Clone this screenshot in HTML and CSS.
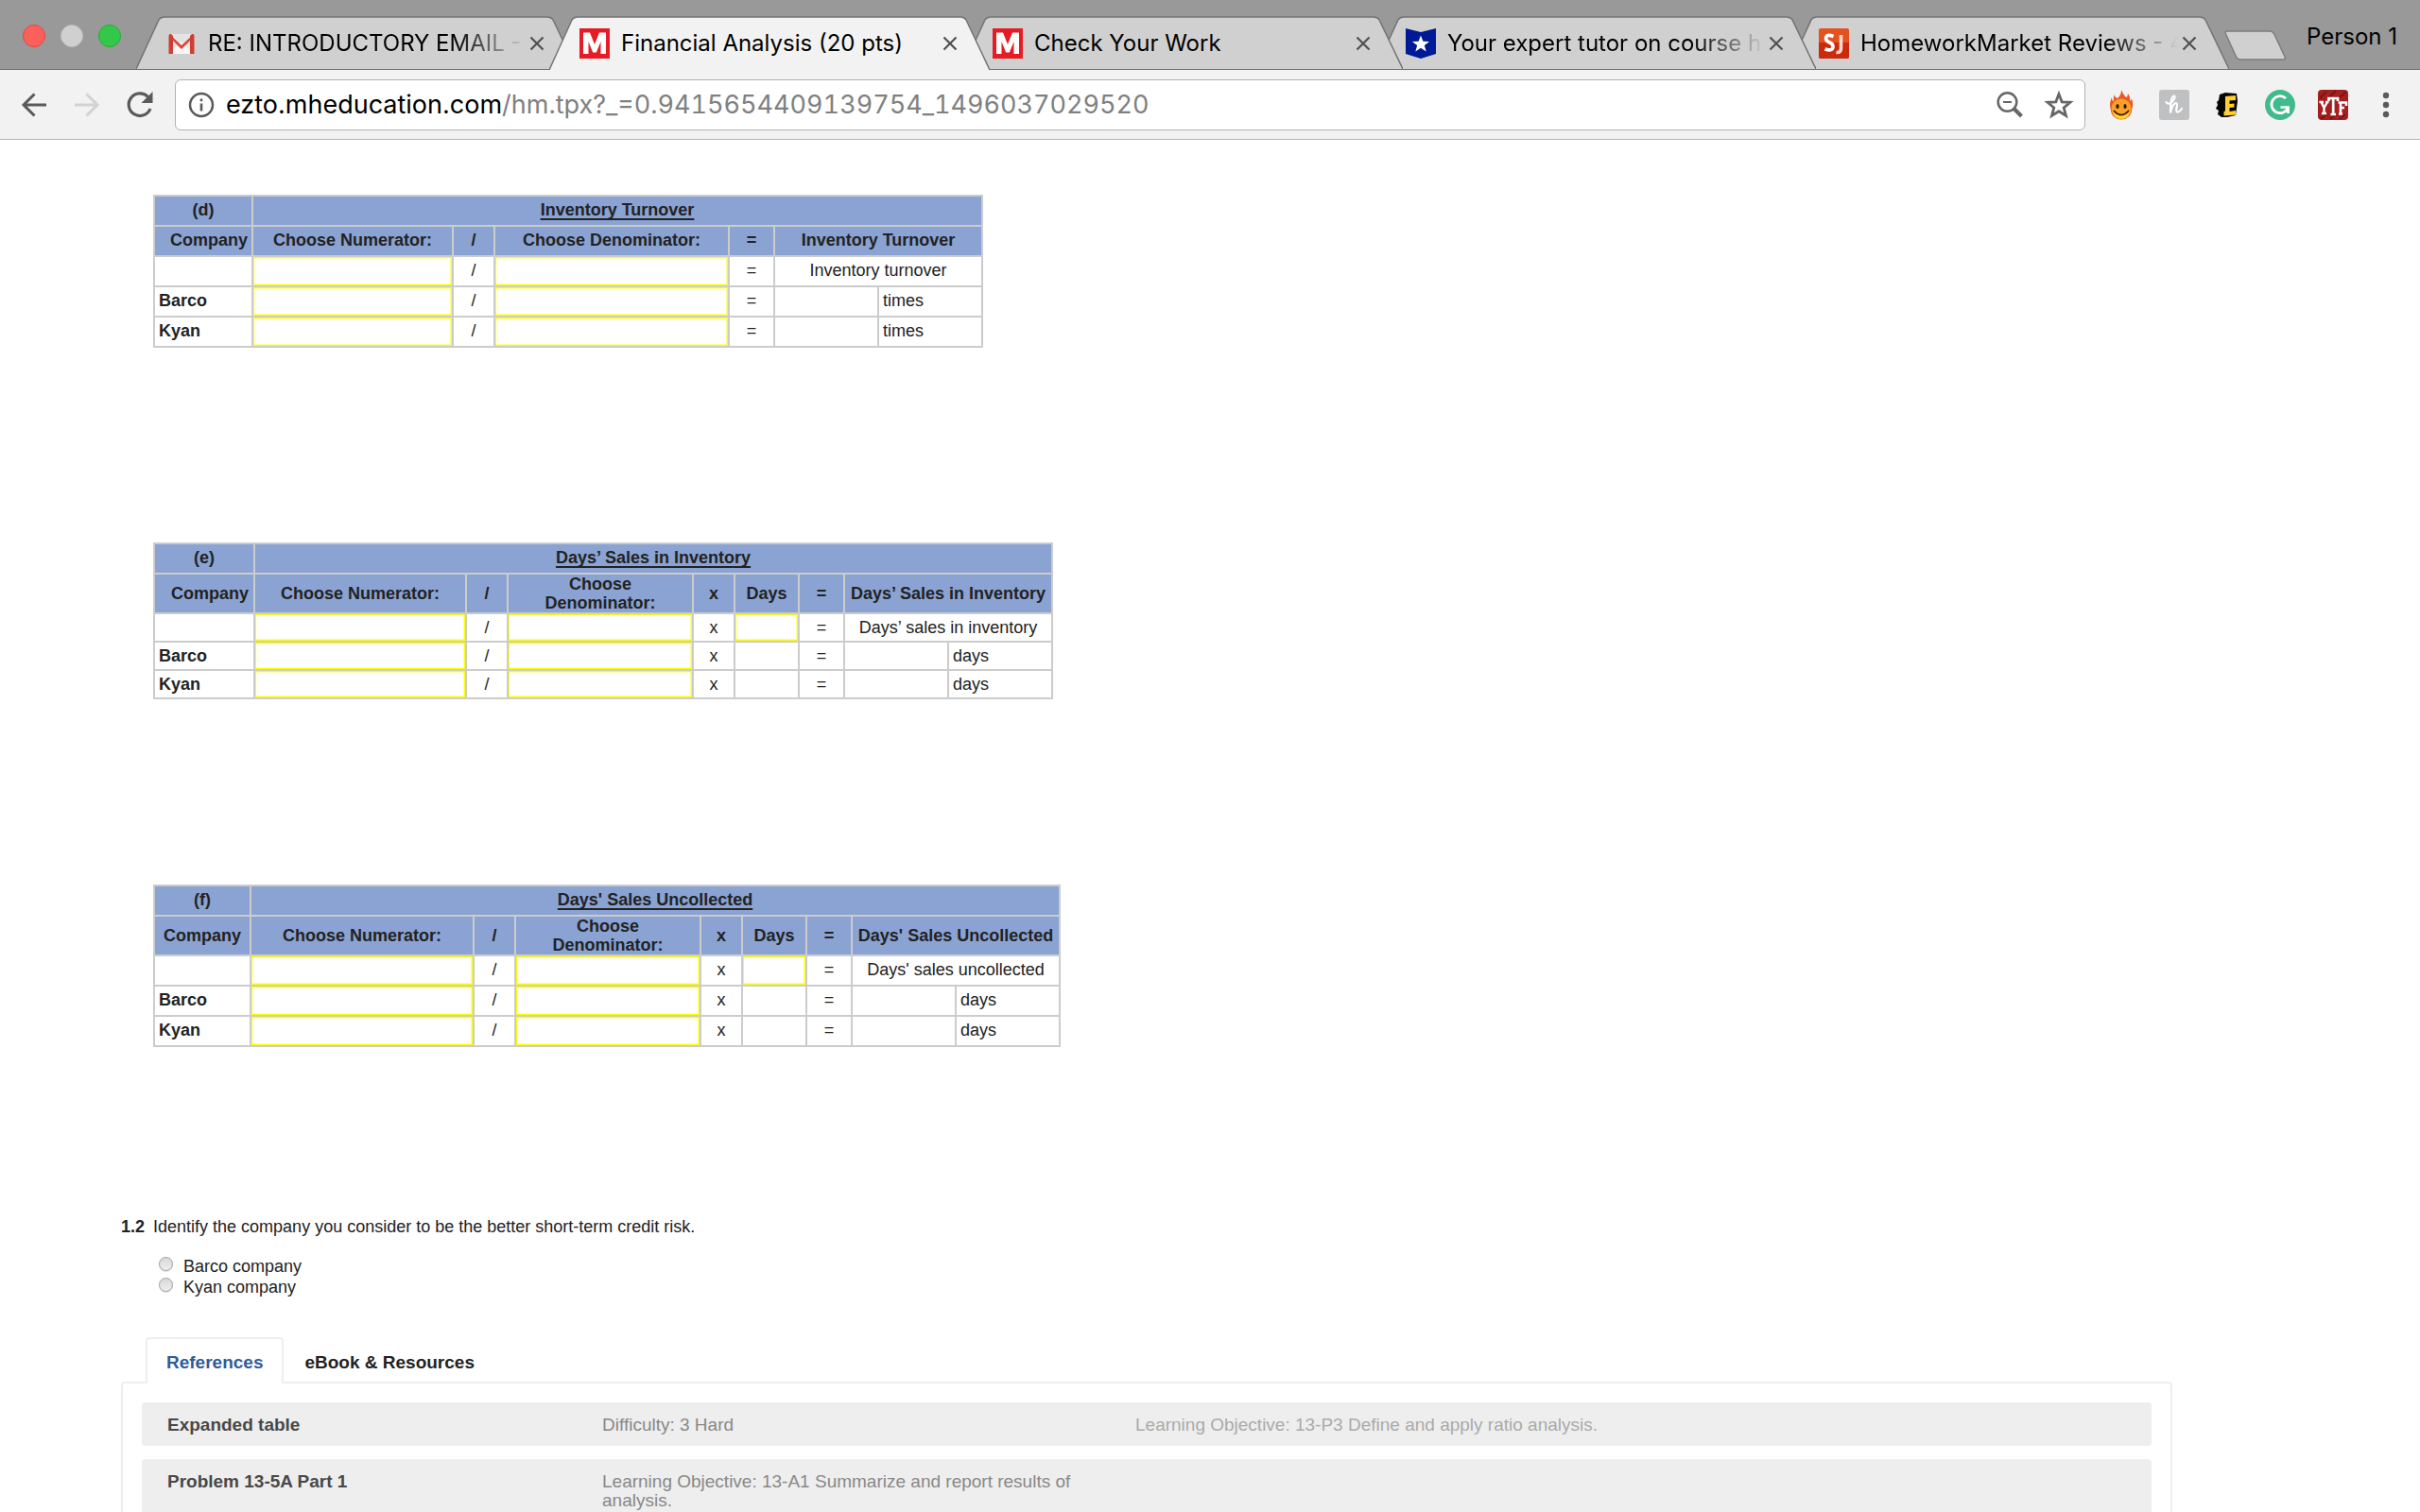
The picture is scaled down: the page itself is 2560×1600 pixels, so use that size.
FILE: index.html
```html
<!DOCTYPE html>
<html lang="en">
<head>
<meta charset="utf-8">
<meta name="viewport" content="width=device-width, initial-scale=1">
<title>Financial Analysis (20 pts)</title>
<link rel="stylesheet" href="styles.css">
</head>
<body>
<svg width="0" height="0" class="defs" aria-hidden="true">
  <symbol id="shape" viewBox="0 0 466 57" preserveAspectRatio="none">
    <path d="M0 57 L24 4 Q26 1 30 1 H435 Q439 1 441 4 L466 57Z" fill="currentColor"/>
    <path d="M0 57 L24 4 Q26 1 30 1 H435 Q439 1 441 4 L466 57" fill="none" stroke="#747474" stroke-width="1.5"/>
  </symbol>
  <symbol id="close" viewBox="0 0 16 16"><path d="M1.500 1.500 L14.500 14.500 M14.500 1.500 L1.500 14.500" stroke="#505050" stroke-width="2.200"/></symbol>
  <symbol id="mh" viewBox="0 0 32 32"><path d="M0 0H32V32H0Z" fill="#e61c24"/><path d="M4 27V4.500H11L16 17L21 4.500H28V27H22.500V14L17.800 25.500H14.200L9.500 14V27Z" fill="#fff"/></symbol>
</svg>

<header class="browser">
  <div class="strip">
    <div class="lights">
      <button class="light red" aria-label="Close window"></button>
      <button class="light grey" aria-label="Minimize window"></button>
      <button class="light green" aria-label="Zoom window"></button>
    </div>
    <nav class="tabs" aria-label="Open tabs">
      <div class="tab t1">
        <svg class="shape"><use href="#shape"/></svg>
        <svg class="fav" viewBox="0 0 32 32"><path d="M3 6H29V27H3Z" fill="#e4e4e4"/><path d="M3 27L16 14L29 27Z" fill="#f6f6f6"/><path d="M3 6L16 18L29 6V9L16 22L3 9Z" fill="#dc4437"/><path d="M2.500 27V8Q2.500 5.500 5 6L7 8V27ZM29.500 27V8Q29.500 5.500 27 6L25 8V27Z" fill="#d03e33"/></svg>
        <a class="title fade" href="#">RE: INTRODUCTORY EMAIL -</a>
        <button class="x" aria-label="Close tab"><svg><use href="#close"/></svg></button>
      </div>
      <div class="tab t2">
        <svg class="shape"><use href="#shape"/></svg>
        <svg class="fav"><use href="#mh"/></svg>
        <a class="title" href="#">Financial Analysis (20 pts)</a>
        <button class="x" aria-label="Close tab"><svg><use href="#close"/></svg></button>
      </div>
      <div class="tab t3">
        <svg class="shape"><use href="#shape"/></svg>
        <svg class="fav"><use href="#mh"/></svg>
        <a class="title" href="#">Check Your Work</a>
        <button class="x" aria-label="Close tab"><svg><use href="#close"/></svg></button>
      </div>
      <div class="tab t4">
        <svg class="shape"><use href="#shape"/></svg>
        <svg class="fav" viewBox="0 0 32 32"><path d="M0 0L16 4L32 0V27L16 32L0 27Z" fill="#001a96"/><path d="M16 7.500L18.400 13.800L25 14L19.800 18.100L21.700 24.600L16 20.800L10.300 24.600L12.200 18.100L7 14L13.600 13.800Z" fill="#fff"/></svg>
        <a class="title fade" href="#">Your expert tutor on course h</a>
        <button class="x" aria-label="Close tab"><svg><use href="#close"/></svg></button>
      </div>
      <div class="tab t5">
        <svg class="shape"><use href="#shape"/></svg>
        <svg class="fav" viewBox="0 0 32 32"><rect width="32" height="32" rx="2" fill="#e5521f"/><path d="M0 15H32V30Q32 32 30 32H2Q0 32 0 30Z" fill="#cc2a0c"/><path d="M15.500 8.500Q8 5.500 7.500 10.500Q7.500 13.500 11.500 15Q15.500 16.500 15 20Q14 24.500 6.500 22" fill="none" stroke="#fff" stroke-width="3.600"/><path d="M23.500 7V21Q23.500 26 18.500 25.500" fill="none" stroke="#fbd9cc" stroke-width="3.600"/></svg>
        <a class="title fade" href="#">HomeworkMarket Reviews - 4</a>
        <button class="x" aria-label="Close tab"><svg><use href="#close"/></svg></button>
      </div>
      <button class="newtab" aria-label="New tab"><svg viewBox="0 0 66 32"><path d="M3 1H48Q51 1 52.500 3.500L64 28Q65.500 31 62 31H17Q14 31 12.500 28L1.500 4Q0.500 1 3 1Z" fill="#d0d0d0" stroke="#7c7c7c" stroke-width="1.500"/></svg></button>
    </nav>
    <button class="person">Person 1</button>
  </div>

  <div class="toolbar">
    <button class="tool" aria-label="Back"><svg viewBox="0 0 32 32"><path d="M29 16H5M16.500 4.500L5 16L16.500 27.500" fill="none" stroke="#5a5a5a" stroke-width="3"/></svg></button>
    <button class="tool" aria-label="Forward"><svg viewBox="0 0 32 32"><path d="M3 16H27M15.500 4.500L27 16L15.500 27.500" fill="none" stroke="#d2d2d2" stroke-width="3"/></svg></button>
    <button class="tool" aria-label="Reload"><svg viewBox="0 0 32 32"><path d="M27 20A11.800 11.800 0 1 1 24.500 7.500" fill="none" stroke="#5a5a5a" stroke-width="3.200"/><path d="M29.500 2V14H17.500Z" fill="#5a5a5a"/></svg></button>
    <div class="omnibox">
      <svg class="info" viewBox="0 0 28 28"><circle cx="14" cy="14" r="12" fill="none" stroke="#5a5a5a" stroke-width="2.500"/><path d="M14 12.500V20.500M14 7.500V10.200" stroke="#5a5a5a" stroke-width="2.600"/></svg>
      <label class="host" for="url">ezto.mheducation.com</label>
      <input class="path" id="url" type="text" value="/hm.tpx?_=0.9415654409139754_1496037029520">
      <button class="icon" aria-label="Zoom"><svg viewBox="0 0 32 32"><circle cx="13.500" cy="13" r="9.800" fill="none" stroke="#666" stroke-width="2.500"/><path d="M9 13H18" stroke="#666" stroke-width="2"/><path d="M20.500 20L28.500 28" stroke="#666" stroke-width="4"/></svg></button>
      <button class="icon star" aria-label="Bookmark"><svg viewBox="0 0 32 32"><path d="M16 4.500L19.200 12.800L28 13.300L21.200 18.900L23.500 27.500L16 22.700L8.500 27.500L10.800 18.900L4 13.300L12.800 12.800Z" fill="none" stroke="#666" stroke-width="2.800"/></svg></button>
    </div>
    <div class="exts">
      <button class="ext" aria-label="Flame"><svg viewBox="0 0 32 32"><path d="M16 0Q18 5 21 8Q23 7 23 4Q26 8 25 12Q27 11 27 9Q29 15 27.500 20Q26.500 31 16 31.500Q5.500 31 4.500 20Q3 14 6 8Q6 12 8 12Q7 8 9 5Q9 8 12 9Q16 6 16 0Z" fill="#ee5626"/><circle cx="16" cy="20" r="10.500" fill="#f8a223"/><path d="M6.500 23Q16 33 25.500 23Q23 31 16 31Q9 31 6.500 23Z" fill="#ffd833"/><ellipse cx="12" cy="17.500" rx="1.600" ry="2.600" fill="#301400"/><ellipse cx="20" cy="17.500" rx="1.600" ry="2.600" fill="#301400"/><path d="M8 22Q16 31 24 22" fill="none" stroke="#301400" stroke-width="1.500"/></svg></button>
      <button class="ext" aria-label="Honey"><svg viewBox="0 0 32 32"><rect width="32" height="32" rx="3" fill="#bfc0c2"/><path d="M7.500 13Q9.500 16.500 13.500 13Q18 8 16 6.500Q13 6.500 12.500 14Q12 20 12 24.500Q14 15 17.500 14Q20 14 18.500 19Q17.500 24 20 23.500Q22 23 24 20" fill="none" stroke="#fff" stroke-width="2.200" stroke-linecap="round"/></svg></button>
      <button class="ext" aria-label="Ebates"><svg viewBox="0 0 32 32"><path d="M8 5L14 3L26 4L27 12L25 27L16 29H10L6 26L7 22L4 20L6 16L5 13L7 11Z" fill="#060606"/><path d="M14 7L25 6V11L18.500 11.500V15L23.500 14.500V18.500L18.500 19V23L25 22V26.500L12.500 27.500V23L14 22.500Z" fill="#ffd02f"/></svg></button>
      <button class="ext" aria-label="Grammarly"><svg viewBox="0 0 32 32"><circle cx="16" cy="16" r="16" fill="#42bb8c"/><path d="M22 9A9 9 0 1 0 24.500 18.500M16.500 18.500H24.500V25" fill="none" stroke="#fff" stroke-width="2.700"/></svg></button>
      <button class="ext" aria-label="YTF"><svg viewBox="0 0 32 32"><rect width="32" height="32" rx="4" fill="#a51f20"/><path d="M2 9L9 2M12 8L19 1M23 8L30 2M3 31L9 26M13 31L18 27M23 31L29 26" stroke="#7e1213" stroke-width="2"/><path d="M1.500 13H6M8 13H11.500M3.500 13L6.500 19L10 13M6.500 19V25M4 25H9" fill="none" stroke="#fff" stroke-width="2.400"/><path d="M11.500 12V9H21V12M16.200 9V26M13.500 26H19" fill="none" stroke="#fff" stroke-width="2.700"/><path d="M22 25.500H26M24 25V13.500M21.500 13.500H30V17M24 19H28" fill="none" stroke="#fff" stroke-width="2.600"/></svg></button>
    </div>
    <button class="menu" aria-label="Menu"><svg viewBox="0 0 8 32"><g fill="#5a5a5a"><circle cx="4" cy="6" r="3.200"/><circle cx="4" cy="16" r="3.200"/><circle cx="4" cy="26" r="3.200"/></g></svg></button>
  </div>
</header>

<main class="page">
  <table class="ratio ratio-d">
    <colgroup><col class="c104"><col class="c212"><col class="c44"><col class="c248"><col class="c48"><col class="c110"><col class="c110"></colgroup>
    <thead>
      <tr><th>(d)</th><th colspan="6"><u>Inventory Turnover</u></th></tr>
      <tr><th class="indent">Company</th><th>Choose Numerator:</th><th>/</th><th>Choose Denominator:</th><th>=</th><th colspan="2">Inventory Turnover</th></tr>
    </thead>
    <tbody>
      <tr><td></td><td><select class="pick" aria-label="Numerator"></select></td><td>/</td><td><select class="pick" aria-label="Denominator"></select></td><td>=</td><td colspan="2">Inventory turnover</td></tr>
      <tr><th>Barco</th><td><input class="pick" type="text" aria-label="Barco numerator"></td><td>/</td><td><input class="pick" type="text" aria-label="Barco denominator"></td><td>=</td><td></td><td class="unit">times</td></tr>
      <tr><th>Kyan</th><td><input class="pick" type="text" aria-label="Kyan numerator"></td><td>/</td><td><input class="pick" type="text" aria-label="Kyan denominator"></td><td>=</td><td></td><td class="unit">times</td></tr>
    </tbody>
  </table>

  <table class="ratio ratio-e">
    <colgroup><col class="c106"><col class="c224"><col class="c44"><col class="c196"><col class="c44"><col class="c68"><col class="c48"><col class="c110"><col class="c110"></colgroup>
    <thead>
      <tr><th>(e)</th><th colspan="8"><u>Days’ Sales in Inventory</u></th></tr>
      <tr class="tall"><th class="indent">Company</th><th>Choose Numerator:</th><th>/</th><th>Choose Denominator:</th><th>x</th><th>Days</th><th>=</th><th colspan="2">Days’ Sales in Inventory</th></tr>
    </thead>
    <tbody>
      <tr><td></td><td><select class="pick" aria-label="Numerator"></select></td><td>/</td><td><select class="pick" aria-label="Denominator"></select></td><td>x</td><td><input class="pick" type="text" aria-label="Days"></td><td>=</td><td colspan="2">Days’ sales in inventory</td></tr>
      <tr><th>Barco</th><td><input class="pick" type="text" aria-label="Barco numerator"></td><td>/</td><td><input class="pick" type="text" aria-label="Barco denominator"></td><td>x</td><td></td><td>=</td><td></td><td class="unit">days</td></tr>
      <tr><th>Kyan</th><td><input class="pick" type="text" aria-label="Kyan numerator"></td><td>/</td><td><input class="pick" type="text" aria-label="Kyan denominator"></td><td>x</td><td></td><td>=</td><td></td><td class="unit">days</td></tr>
    </tbody>
  </table>

  <table class="ratio ratio-f">
    <colgroup><col class="c102"><col class="c236"><col class="c44"><col class="c196"><col class="c44"><col class="c68"><col class="c48"><col class="c110"><col class="c110"></colgroup>
    <thead>
      <tr><th>(f)</th><th colspan="8"><u>Days' Sales Uncollected</u></th></tr>
      <tr class="tall"><th>Company</th><th>Choose Numerator:</th><th>/</th><th>Choose Denominator:</th><th>x</th><th>Days</th><th>=</th><th colspan="2">Days' Sales Uncollected</th></tr>
    </thead>
    <tbody>
      <tr><td></td><td><select class="pick" aria-label="Numerator"></select></td><td>/</td><td><select class="pick" aria-label="Denominator"></select></td><td>x</td><td><input class="pick" type="text" aria-label="Days"></td><td>=</td><td colspan="2">Days' sales uncollected</td></tr>
      <tr><th>Barco</th><td><input class="pick" type="text" aria-label="Barco numerator"></td><td>/</td><td><input class="pick" type="text" aria-label="Barco denominator"></td><td>x</td><td></td><td>=</td><td></td><td class="unit">days</td></tr>
      <tr><th>Kyan</th><td><input class="pick" type="text" aria-label="Kyan numerator"></td><td>/</td><td><input class="pick" type="text" aria-label="Kyan denominator"></td><td>x</td><td></td><td>=</td><td></td><td class="unit">days</td></tr>
    </tbody>
  </table>

  <section class="question">
    <p class="prompt"><b>1.2</b><span>Identify the company you consider to be the better short-term credit risk.</span></p>
    <div class="options">
      <label class="option"><input type="radio" name="risk">Barco company</label>
      <label class="option"><input type="radio" name="risk">Kyan company</label>
    </div>
  </section>

  <section class="resources">
    <div class="restabs">
      <a class="restab active" href="#refs">References</a>
      <a class="restab" href="#ebook">eBook &amp; Resources</a>
    </div>
    <div class="panel" id="refs">
      <div class="ref"><strong>Expanded table</strong><span>Difficulty: 3 Hard</span><span class="pale">Learning Objective: 13-P3 Define and apply ratio analysis.</span></div>
      <div class="ref"><strong>Problem 13-5A Part 1</strong><span>Learning Objective: 13-A1 Summarize and report results of analysis.</span></div>
    </div>
  </section>
</main>
</body>
</html>
```
FILE: styles.css
```css
* { box-sizing: border-box; }
body {
  margin: 0;
  height: 100vh;
  display: flex;
  flex-direction: column;
  overflow: hidden;
  background: #fff;
  color: #222;
  font: 18px/20px "Liberation Sans", Arial, sans-serif;
}
button { border: 0; padding: 0; background: none; color: inherit; font: inherit; }
button svg { display: block; width: 100%; height: 100%; }
a { color: inherit; text-decoration: none; }
.defs { position: absolute; }

/* browser frame */
.browser { flex: none; font-family: Inter, sans-serif; color: #000; }
.strip {
  display: flex;
  height: 74px;
  background: #999;
  border-bottom: 1px solid #6f6f6f;
}
.lights { flex: none; display: flex; gap: 16px; width: 144px; padding: 26px 0 0 24px; }
.light { width: 24px; height: 24px; border-radius: 50%; }
.red { background: #fc605b; border: 1px solid #e2463f; }
.grey { background: #d0d0d0; border: 1px solid #bdbdbd; }
.green { background: #34c84a; border: 1px solid #24ab35; }
.tabs { flex: 1; display: flex; min-width: 0; padding-top: 17px; }
.tab {
  position: relative;
  flex: 0 1 466px;
  min-width: 0;
  height: 56px;
  margin-right: -29px;
  padding: 0 34px 0 32px;
  display: flex;
  align-items: center;
  color: #d0d0d0;
}
.t1 { z-index: 4; }
.t2 { z-index: 5; color: #f2f2f2; height: 57px; padding-bottom: 1px; }
.t3 { z-index: 3; }
.t4 { z-index: 2; }
.t5 { z-index: 1; }
.shape { position: absolute; inset: 0; width: 100%; height: 100%; z-index: -1; }
.fav { flex: none; width: 32px; height: 32px; margin: 2px 12px 0 0; }
.title { flex: 1; min-width: 0; margin-top: 2px; overflow: hidden; white-space: nowrap; color: #000; font-size: 24px; line-height: 32px; }
.fade { mask-image: linear-gradient(to right, #000 260px, transparent 336px); }
.x { flex: none; width: 16px; height: 16px; margin: 2px 0 0; }
.newtab { flex: none; width: 66px; height: 32px; margin: 15px 0 0 24px; }
.person { flex: none; margin-right: 24px; padding-top: 4px; font-size: 24px; line-height: 32px; align-self: center; }

.toolbar {
  display: flex;
  align-items: center;
  height: 74px;
  padding: 0 32px 0 20px;
  background: #f2f2f2;
  border-bottom: 1px solid #b4b4b4;
}
.tool { flex: none; width: 32px; height: 32px; margin-right: 24px; }
.tool + .tool + .tool { margin-right: 21px; }
.omnibox {
  flex: 1;
  display: flex;
  align-items: center;
  min-width: 0;
  height: 54px;
  padding: 0 11px 0 13px;
  background: #fff;
  border: 1px solid #b2b2b2;
  border-radius: 6px;
  font-size: 27px;
}
.info { flex: none; width: 28px; height: 28px; margin-right: 12px; }
.host { flex: none; line-height: 36px; }
.path { flex: 1; min-width: 0; border: 0; padding: 0; background: none; outline: 0; color: #808080; font: inherit; font-variant-numeric: tabular-nums; line-height: 36px; height: 36px; }
.icon { flex: none; width: 32px; height: 32px; margin-left: 20px; }
.exts { flex: none; display: flex; gap: 24px; margin: 0 36px 0 22px; }
.ext { width: 32px; height: 32px; }
.menu { flex: none; width: 8px; height: 32px; }

/* page */
.page { flex: 1; min-height: 0; overflow: hidden; padding: 58px 262px 0 128px; }
.ratio {
  table-layout: fixed;
  border-collapse: collapse;
  margin-left: 34px;
}
.ratio-d { width: 878px; margin-bottom: 206px; }
.ratio-e { width: 952px; margin-bottom: 196px; }
.ratio-f { width: 960px; margin-bottom: 180px; }
.c44 { width: 44px; }
.c48 { width: 48px; }
.c68 { width: 68px; }
.c102 { width: 102px; }
.c104 { width: 104px; }
.c106 { width: 106px; }
.c110 { width: 110px; }
.c196 { width: 196px; }
.c212 { width: 212px; }
.c224 { width: 224px; }
.c236 { width: 236px; }
.c248 { width: 248px; }
.ratio tr { height: 32px; }
.ratio-e tbody tr { height: 30px; }
.ratio .tall { height: 42px; }
.ratio th, .ratio td { border: 2px solid #ccc; padding: 0 4px 2px; text-align: center; }
.ratio .tall th, .ratio-e tbody th, .ratio-e tbody td { padding-bottom: 0; }
.ratio thead th { background: #8aa3d3; }
.ratio tbody th, .ratio .unit { text-align: left; }
.ratio .indent { padding-left: 16px; }
.ratio u { text-underline-offset: 3px; text-decoration-thickness: 2px; text-decoration-skip-ink: none; }
.ratio td:has(.pick) { padding: 0; }
.pick {
  display: block;
  width: 100%;
  height: 30px;
  border: 1px solid #ff0;
  border-radius: 0;
  padding: 0;
  background: #fff;
  appearance: none;
  outline: 0;
  box-shadow: inset -1px -1px #ffff8c, inset 0 1px #ffffa8;
}
.ratio-e .pick { height: 28px; }

.prompt { display: flex; gap: 9px; margin: 0; }
.options { padding: 21px 0 0 40px; }
.option { display: flex; gap: 11px; line-height: 22px; }
.option input {
  appearance: none;
  width: 15px;
  height: 15px;
  margin: 1px 0 0;
  border: 1px solid #a0a0a0;
  border-radius: 50%;
  background: linear-gradient(#d8d8d8, #eee);
  box-shadow: 0 1px 1px #ddd;
}

.resources { margin-top: 42px; font-size: 19px; }
.restabs { display: flex; padding-left: 26px; }
.restab { padding: 14px 20px 11px; height: 47px; border: 2px solid transparent; border-bottom: 0; font-weight: bold; line-height: 22px; }
.active { position: relative; margin-bottom: -2px; color: #2f5c99; background: #fff; border-color: #eee; border-radius: 4px 4px 0 0; height: 49px; }
.panel { display: grid; gap: 14px; border: 2px solid #eee; border-radius: 4px 4px 0 0; padding: 20px; }
.ref {
  display: grid;
  grid-template-columns: 460px 524px 1fr;
  column-gap: 0;
  padding: 14px 27px 12px;
  border-radius: 4px;
  background: #eee;
  color: #888;
}
.ref .pale { margin-left: 40px; color: #aaa; }
.ref strong { color: #484848; }
```
